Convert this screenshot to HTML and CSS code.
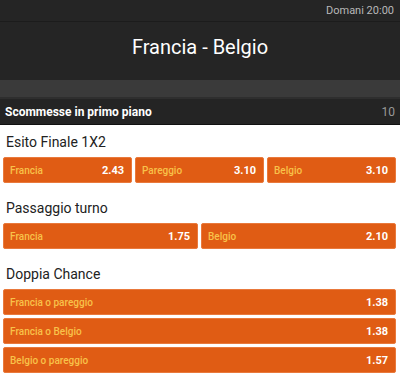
FILE: index.html
```html
<!DOCTYPE html>
<html lang="it">
<head>
    <meta charset="UTF-8">
    <meta name="viewport" content="width=device-width, initial-scale=1.0">
    <title>Francia - Belgio</title>
    <link rel="stylesheet" href="styles.css">
</head>
<body>
    <div class="event-head">
        <div class="event-time">Domani 20:00</div>
        <div class="event-title">Francia - Belgio</div>
        <div class="event-band"></div>
    </div>
    <div class="featured-bar">
        <span>Scommesse in primo piano</span>
        <span class="featured-count">10</span>
    </div>

    <div class="market">
        <h2>Esito Finale 1X2</h2>
        <div class="odds-row">
            <div class="odd"><span class="odd-label">Francia</span><span class="odd-value">2.43</span></div>
            <div class="odd"><span class="odd-label">Pareggio</span><span class="odd-value">3.10</span></div>
            <div class="odd"><span class="odd-label">Belgio</span><span class="odd-value">3.10</span></div>
        </div>
    </div>

    <div class="market">
        <h2>Passaggio turno</h2>
        <div class="odds-row">
            <div class="odd"><span class="odd-label">Francia</span><span class="odd-value">1.75</span></div>
            <div class="odd"><span class="odd-label">Belgio</span><span class="odd-value">2.10</span></div>
        </div>
    </div>

    <div class="market">
        <h2>Doppia Chance</h2>
        <div class="odds-list">
            <div class="odd"><span class="odd-label">Francia o pareggio</span><span class="odd-value">1.38</span></div>
            <div class="odd"><span class="odd-label">Francia o Belgio</span><span class="odd-value">1.38</span></div>
            <div class="odd"><span class="odd-label">Belgio o pareggio</span><span class="odd-value">1.57</span></div>
        </div>
    </div>
</body>
</html>
```

FILE: styles.css
```css
body {
    font-family: Roboto, "Liberation Sans", Arial, sans-serif;
    margin: 0;
    padding: 0;
    background-color: #fff;
}
.event-head {
    background-color: #252525;
}
.event-time {
    height: 21px;
    line-height: 21px;
    text-align: right;
    padding-right: 6px;
    font-size: 11px;
    color: #b8b8b8;
    border-bottom: 1px solid #1c1c1c;
}
.event-title {
    height: 58px;
    line-height: 50px;
    text-align: center;
    font-size: 20px;
    color: #fff;
}
.event-band {
    height: 17px;
    background-color: #3a3a3a;
    border-bottom: 2px solid #2e2e2e;
}
.featured-bar {
    display: flex;
    justify-content: space-between;
    align-items: center;
    height: 25px;
    padding: 0 5px 0 5px;
    background-color: #242424;
    color: #fff;
    font-size: 12px;
    font-weight: bold;
    border-bottom: 1px solid #111;
}
.featured-count {
    font-weight: normal;
    color: #999;
}
.market {
    padding: 0 4px 0 3px;
}
.market h2 {
    margin: 0;
    padding: 9px 3px 0 3px;
    height: 23px;
    line-height: 16px;
    font-size: 14px;
    font-weight: normal;
    color: #222;
}
.market:first-of-type {
    border-top: 1px solid #bdbdbd;
}
.odds-row {
    display: flex;
    gap: 3px;
    margin-bottom: 8px;
}
.odds-row .odd {
    flex: 1;
}
.odds-list {
    display: flex;
    flex-direction: column;
    gap: 3px;
}
.odd {
    display: flex;
    justify-content: space-between;
    align-items: center;
    height: 24px;
    padding: 0 7px 0 6px;
    background-color: #e05c14;
    border: 1px solid #e9793c;
    border-radius: 2px;
    font-size: 10px;
}
.odd-label {
    color: #f8c24a;
    font-weight: 500;
}
.odd-value {
    color: #fff;
    font-weight: bold;
    font-size: 11px;
}
```
